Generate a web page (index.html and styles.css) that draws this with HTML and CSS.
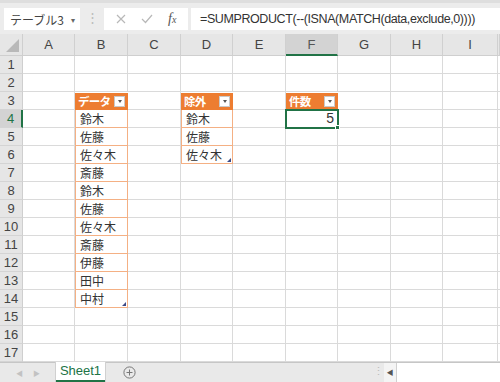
FILE: index.html
```html
<!DOCTYPE html>
<html lang="ja">
<head>
    <meta charset="UTF-8">
    <title>Excel - 件数</title>
    <link rel="stylesheet" href="styles.css">
</head>
<body>
    <div class="toolbar">
        <div class="name-box">
            <span>テーブル3</span>
            <span class="caret">&#9662;</span>
        </div>
        <div class="grip">&#8942;</div>
        <div class="fx-buttons">
            <svg width="10" height="10" viewBox="0 0 10 10"><path d="M1 1L9 9M9 1L1 9" stroke="#b8b8b8" stroke-width="1.2" fill="none"/></svg>
            <svg width="12" height="10" viewBox="0 0 12 10"><path d="M1 5L4.5 8.5L11 1" stroke="#b8b8b8" stroke-width="1.2" fill="none"/></svg>
            <span class="fx"><i>f</i><small>x</small></span>
        </div>
        <div class="formula">=SUMPRODUCT(--(ISNA(MATCH(data,exclude,0))))</div>
    </div>

    <div class="sheet">
        <div class="corner"></div>
        <div class="col-head">A</div>
        <div class="col-head">B</div>
        <div class="col-head">C</div>
        <div class="col-head">D</div>
        <div class="col-head">E</div>
        <div class="col-head selected">F</div>
        <div class="col-head">G</div>
        <div class="col-head">H</div>
        <div class="col-head">I</div>
        <div class="col-head"></div>
    </div>

    <div class="tabbar">
        <div class="tab-nav"><span>&#9664;</span><span>&#9654;</span></div>
        <div class="tab active">Sheet1</div>
        <div class="tab-add">
            <svg width="13" height="13" viewBox="0 0 13 13"><circle cx="6.5" cy="6.5" r="5.6" stroke="#777" fill="none"/><path d="M6.5 3.5V9.5M3.5 6.5H9.5" stroke="#777"/></svg>
        </div>
        <div class="spacer"></div>
        <div class="grip small">&#8942;</div>
        <div class="scroll-left">&#9664;</div>
        <div class="hscroll"></div>
    </div>

    <script>
        // cell contents: row -> {col: {text, cls}}
        const cells = {
            3: { 1: { text: 'データ', cls: 'th' }, 3: { text: '除外', cls: 'th' }, 5: { text: '件数', cls: 'th' } },
            4: { 1: '鈴木', 3: '鈴木', 5: { text: '5', cls: 'active num' } },
            5: { 1: '佐藤', 3: '佐藤' },
            6: { 1: '佐々木', 3: { text: '佐々木', cls: 'td last' } },
            7: { 1: '斎藤' },
            8: { 1: '鈴木' },
            9: { 1: '佐藤' },
            10: { 1: '佐々木' },
            11: { 1: '斎藤' },
            12: { 1: '伊藤' },
            13: { 1: '田中' },
            14: { 1: { text: '中村', cls: 'td last' } }
        };

        const sheet = document.querySelector('.sheet');
        for (let r = 1; r <= 17; r++) {
            const head = document.createElement('div');
            head.className = 'row-head' + (r === 4 ? ' selected' : '');
            head.textContent = r;
            sheet.appendChild(head);
            for (let c = 0; c < 10; c++) {
                const cell = document.createElement('div');
                let data = cells[r] && cells[r][c];
                if (typeof data === 'string') data = { text: data, cls: 'td' };
                cell.className = 'cell' + (data ? ' ' + data.cls : '');
                if (data) {
                    if (data.cls === 'th') {
                        cell.innerHTML = `<span class="th-text">${data.text}</span><span class="filter"></span>`;
                    } else {
                        cell.textContent = data.text;
                    }
                }
                sheet.appendChild(cell);
            }
        }
    </script>
</body>
</html>
```

FILE: styles.css
```css
/* page */
body { margin: 0; width: 500px; height: 382px; overflow: hidden; background: #fff; font-family: "Liberation Sans", "Noto Sans CJK JP", sans-serif; color: #222; }

/* formula bar */
.toolbar { height: 34px; box-sizing: border-box; padding-top: 8px; display: flex; align-items: flex-start; background: #ececec; border-top: 3px solid #dedede; }
.name-box { width: 76px; height: 22px; margin-left: 4px; margin-top: -3px; background: #fff; display: flex; align-items: center; justify-content: space-between; padding: 0 5px 0 6px; box-sizing: border-box; font-size: 12px; color: #444; font-family: "Noto Sans CJK JP", sans-serif; }
.name-box .caret { font-size: 8px; color: #666; }
.grip { width: 24px; margin-top: -1px; text-align: center; color: #bbb; font-size: 13px; }
.fx-buttons { width: 84px; height: 22px; margin-top: -3px; background: #fff; display: flex; align-items: center; justify-content: space-around; padding: 0 4px; box-sizing: border-box; }
.fx { font-family: "Liberation Serif", serif; color: #555; font-size: 14px; }
.fx small { font-size: 10px; font-style: italic; }
.formula { flex: 1; height: 22px; margin-top: -3px; margin-left: 3px; background: #fff; font-size: 12.5px; letter-spacing: -0.4px; line-height: 22px; padding-left: 9px; color: #333; white-space: nowrap; overflow: hidden; }

/* grid */
.sheet { display: grid; grid-template-columns: 23px 52px 53px 53px 52px 53px 52px 53px 52px 55px 2px; grid-template-rows: 22px repeat(17, 18px); background: #fff; }
.corner { background: #e6e6e6; border-right: 1px solid #cfcfcf; border-bottom: 1px solid #cfcfcf; position: relative; }
.corner::after { content: ""; position: absolute; right: 3px; bottom: 3px; border-style: solid; border-width: 0 0 13px 13px; border-color: transparent transparent #b9b9b9 transparent; }
.col-head { background: #e6e6e6; border-right: 1px solid #d0d0d0; border-bottom: 1px solid #cfcfcf; font-size: 13px; color: #444; text-align: center; line-height: 21px; }
.col-head.selected { background: #d3d3d3; border-bottom: 2px solid #217346; color: #555; }
.row-head { background: #e6e6e6; border-right: 1px solid #cfcfcf; border-bottom: 1px solid #d4d4d4; font-size: 13px; color: #444; text-align: center; line-height: 18px; }
.row-head.selected { background: #d3d3d3; border-right: 2px solid #217346; color: #217346; }

.cell { border-right: 1px solid #dadada; border-bottom: 1px solid #dadada; font-size: 12px; line-height: 17px; padding-left: 4px; font-family: "Noto Sans CJK JP", sans-serif; color: #333; white-space: nowrap; position: relative; }
.cell.th { background: #ed7d31; color: #fff; font-weight: bold; display: flex; align-items: center; justify-content: space-between; padding-left: 3px; padding-right: 2px; border-right-color: #ed7d31; border-bottom-color: #ed7d31; margin-top: 1px; }
.th-text { font-size: 11.5px; letter-spacing: -0.8px; }
.cell.td { border-right-color: #f4b084; border-bottom-color: #f4b084; box-shadow: inset 1px 0 #f4b084; padding-left: 5px; }
.cell.last::after { content: ""; position: absolute; right: 1px; bottom: 1px; border-style: solid; border-width: 0 0 4px 4px; border-color: transparent transparent #3c4a86 transparent; }
.filter { width: 11px; height: 11px; flex-shrink: 0; background: #fff; border: 1px solid #c9c9c9; box-sizing: border-box; position: relative; }
.filter::after { content: ""; position: absolute; left: 2.5px; top: 3.5px; border-style: solid; border-width: 3px 2.5px 0 2.5px; border-color: #555 transparent transparent transparent; }
.cell.num { text-align: right; padding-right: 3px; font-family: "Liberation Sans", sans-serif; font-size: 14px; }
.cell.active { outline: 2px solid #217346; outline-offset: -1px; z-index: 1; }
.cell.active::after { content: ""; position: absolute; right: -3px; bottom: -3px; width: 5px; height: 5px; background: #217346; border: 1px solid #fff; box-sizing: border-box; }

/* sheet tabs */
.tabbar { height: 20px; display: flex; align-items: stretch; background: #e9e9e9; border-top: 1px solid #c6c6c6; box-sizing: border-box; }
.tab-nav { width: 56px; display: flex; align-items: center; justify-content: center; gap: 10px; font-size: 7px; color: #c2c2c2; }
.tab { width: 49px; background: #fff; color: #217346; font-size: 13px; text-align: center; line-height: 18px; border-bottom: 2px solid #217346; margin-top: -1px; box-shadow: 1px 0 #d0d0d0, -1px 0 #d0d0d0; }
.tab-add { width: 48px; display: flex; align-items: center; justify-content: center; }
.spacer { flex: 1; }
.grip.small { width: 12px; line-height: 19px; font-size: 11px; color: #bbb; }
.scroll-left { width: 12px; font-size: 7px; color: #555; line-height: 19px; text-align: center; background: #f4f4f4; }
.hscroll { width: 103px; background: #fff; border-left: 1px solid #d0d0d0; }
```
